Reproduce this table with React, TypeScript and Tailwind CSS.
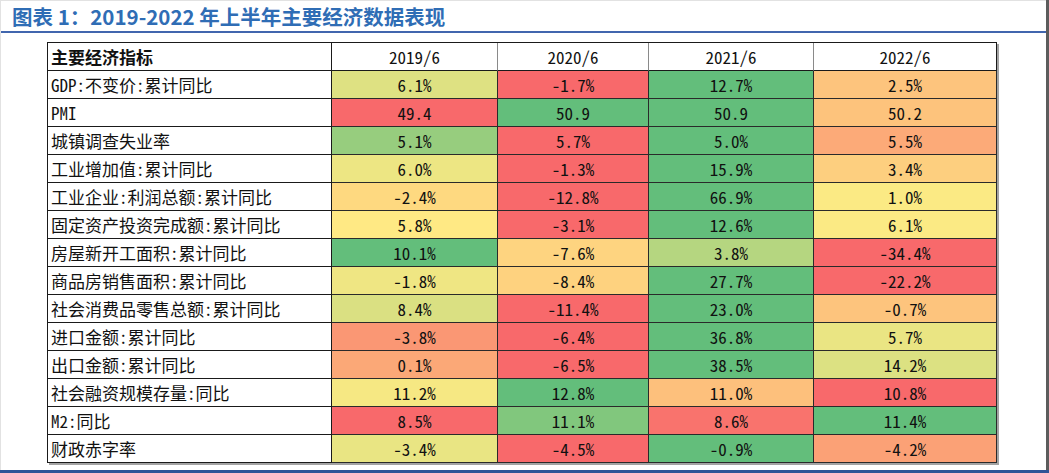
import React from "react";

type Row = { label: string; values: number[]; unit: string; reverse?: boolean };

const rows: Row[] = [
  { label: "GDP:不变价:累计同比", values: [6.1, -1.7, 12.7, 2.5], unit: "%" },
  { label: "PMI", values: [49.4, 50.9, 50.9, 50.2], unit: "" },
  { label: "城镇调查失业率", values: [5.1, 5.7, 5.0, 5.5], unit: "%", reverse: true },
  { label: "工业增加值:累计同比", values: [6.0, -1.3, 15.9, 3.4], unit: "%" },
  { label: "工业企业:利润总额:累计同比", values: [-2.4, -12.8, 66.9, 1.0], unit: "%" },
  { label: "固定资产投资完成额:累计同比", values: [5.8, -3.1, 12.6, 6.1], unit: "%" },
  { label: "房屋新开工面积:累计同比", values: [10.1, -7.6, 3.8, -34.4], unit: "%" },
  { label: "商品房销售面积:累计同比", values: [-1.8, -8.4, 27.7, -22.2], unit: "%" },
  { label: "社会消费品零售总额:累计同比", values: [8.4, -11.4, 23.0, -0.7], unit: "%" },
  { label: "进口金额:累计同比", values: [-3.8, -6.4, 36.8, 5.7], unit: "%" },
  { label: "出口金额:累计同比", values: [0.1, -6.5, 38.5, 14.2], unit: "%" },
  { label: "社会融资规模存量:同比", values: [11.2, 12.8, 11.0, 10.8], unit: "%" },
  { label: "M2:同比", values: [8.5, 11.1, 8.6, 11.4], unit: "%" },
  { label: "财政赤字率", values: [-3.4, -4.5, -0.9, -4.2], unit: "%" },
];

const RED = [248, 105, 107];
const YEL = [255, 235, 132];
const GRN = [99, 190, 123];

function mix(a: number[], b: number[], t: number) {
  return `rgb(${a.map((v, i) => Math.round(v + (b[i] - v) * t)).join(",")})`;
}

function colorFor(v: number, vals: number[], reverse?: boolean) {
  const s = [...vals].sort((x, y) => x - y);
  const min = s[0];
  const max = s[s.length - 1];
  const med = (s[1] + s[2]) / 2;
  const lo = reverse ? GRN : RED;
  const hi = reverse ? RED : GRN;
  if (v <= med) {
    const t = med === min ? 1 : (v - min) / (med - min);
    return mix(lo, YEL, t);
  }
  const t = max === med ? 0 : (v - med) / (max - med);
  return mix(YEL, hi, t);
}

const headers = ["2019/6", "2020/6", "2021/6", "2022/6"];

export default function App() {
  return (
    <div className="w-[1049px] h-[473px] bg-white flex flex-col overflow-hidden">
      <div className="flex flex-1 min-h-0">
        <div className="flex-1 flex flex-col border-t border-l border-[#e2e2e2]">
          <div className="h-[30px] pl-[11px] flex items-center text-[20.5px] font-bold text-[#2f6db5] font-['Noto_Sans_CJK_SC',sans-serif] leading-none">
            图表 1：2019-2022 年上半年主要经济数据表现
          </div>
          <div className="h-[2px] bg-[#4166ae]" />
          <div className="pl-[46px] pt-[9px]">
            <div className="w-[950px] grid grid-cols-[284px_166px_151px_165px_183px] border-t border-l border-[#1a1a1a] shadow-[2px_2px_0_0_#a3a3a3] font-['Noto_Sans_Mono_CJK_SC','Noto_Sans_CJK_SC',monospace] text-[17px] text-[#111]">
              <div className="h-[28px] border-r border-b border-[#1a1a1a] pl-[3px] flex items-center font-bold">
                主要经济指标
              </div>
              {headers.map((h, i) => (
                <div
                  key={h}
                  className={`h-[28px] border-b border-r flex items-center justify-center ${
                    i === 3 ? "border-r-[#1a1a1a]" : "border-r-[#8a8a8a]"
                  } border-b-[#1a1a1a]`}
                >
                  {h}
                </div>
              ))}
              {rows.map((r) => (
                <React.Fragment key={r.label}>
                  <div className="h-[28px] border-r border-b border-[#1a1a1a] pl-[3px] flex items-center whitespace-nowrap">
                    {r.label}
                  </div>
                  {r.values.map((v, i) => (
                    <div
                      key={i}
                      className="h-[28px] border-r border-b border-[#2a2a2a] flex items-center justify-center"
                      style={{ backgroundColor: colorFor(v, r.values, r.reverse) }}
                    >
                      {v.toFixed(1)}
                      {r.unit}
                    </div>
                  ))}
                </React.Fragment>
              ))}
            </div>
          </div>
        </div>
        <div className="w-[3px] bg-[#5c5c5c]" />
      </div>
      <div className="h-[3px] bg-[#2f5597]" />
    </div>
  );
}
